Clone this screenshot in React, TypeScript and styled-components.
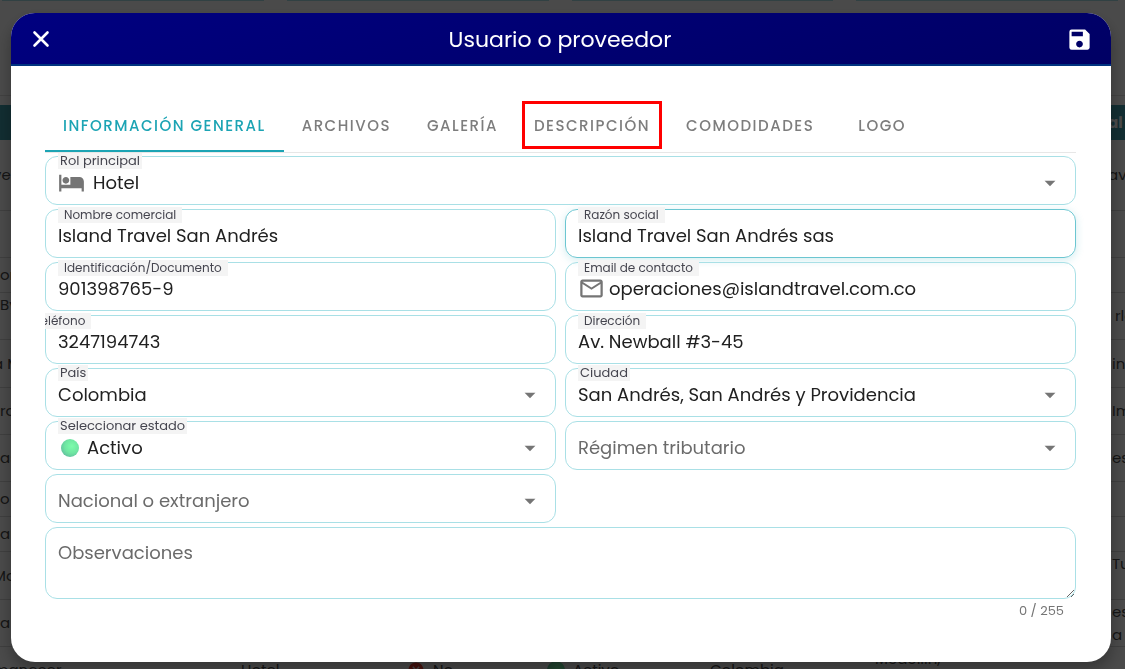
import React, { useState } from "react";
import styled, { createGlobalStyle, css } from "styled-components";
import { MdArrowDropDown, MdHotel, MdOutlineEmail, MdSave, MdCancel } from "react-icons/md";

const GlobalStyle = createGlobalStyle`
  * { box-sizing: border-box; }
  body {
    margin: 0;
    background: #fff;
    color: #212121;
    font-family: Poppins, Inter, "Open Sans", sans-serif;
  }
  button, input, select, textarea { font: inherit; color: inherit; }
`;

/* Listing behind the dialog */

const Page = styled.div`
  height: 100vh;
  overflow: hidden;
`;

const Filters = styled.div`
  display: grid;
  grid-template-columns: repeat(4, 1fr);
  gap: 23px;
  height: 96px;
  padding: 0 7px 0 2px;
  border-bottom: 1px solid #e0e0e0;
`;

const FilterEdge = styled.div`
  height: 1px;
  background: #a9dfe6;
`;

const Listing = styled.table`
  width: calc(100% + 7px);
  margin: 9px 0 0 -7px;
  border-collapse: collapse;
  table-layout: fixed;
  font-size: 15px;
  white-space: nowrap;

  th {
    height: 35px;
    padding: 0;
    background: #3f9dab;
    color: #fff;
    text-align: left;
  }
`;

const ListingRow = styled.tr<{ $height: number }>`
  height: ${(p) => p.$height}px;
`;

const Cell = styled.td<{ $inset?: number; $top?: boolean }>`
  padding: 0 0 0 ${(p) => p.$inset ?? 0}px;
  border-bottom: 1px solid #d8d8d8;
  color: #4a4a4a;
  line-height: 23px;
  vertical-align: ${(p) => (p.$top ? "top" : "middle")};
`;

const StateCell = styled.span`
  display: flex;
  align-items: center;
  gap: 8px;
`;

const Dot = styled.span`
  width: 18px;
  height: 18px;
  border-radius: 50%;
  background: radial-gradient(circle at 60% 40%, #7dfcab 0%, #6fe6a2 45%, #5aa69c 100%);
`;

/* Dialog */

const Scrim = styled.div`
  position: fixed;
  inset: 0;
  padding: 13px 14px 7px 11px;
  background: rgba(0, 0, 0, 0.71);
`;

const Dialog = styled.section`
  border-radius: 24px;
  overflow: hidden;
  background: #fff;
  box-shadow: 0 8px 16px rgba(0, 0, 0, 0.3);
`;

const Header = styled.header`
  display: flex;
  align-items: center;
  justify-content: space-between;
  height: 53px;
  padding: 1px 18px 0 16px;
  background: linear-gradient(165deg, #000080, #000064);
  border-bottom: 2px solid #003380;
  color: #fff;
`;

const Title = styled.h1`
  margin: 0;
  padding-top: 2px;
  font-size: 22px;
  line-height: 32px;
  font-weight: 400;
`;

const IconButton = styled.button`
  display: flex;
  padding: 0;
  border: 0;
  background: none;
  color: #fff;
  cursor: pointer;
`;

const Content = styled.div`
  padding: 34px 35px 42px 34px;
`;

const Tabs = styled.nav`
  display: flex;
  height: 53px;
  margin-bottom: 3px;
  border-bottom: 1px solid #e7e7e7;
`;

const Tab = styled.button<{ $active: boolean; $marked: boolean }>`
  position: relative;
  min-width: 100px;
  padding: 0 18px;
  border: 0;
  border-bottom: 2px solid ${(p) => (p.$active ? "#1ca4b4" : "transparent")};
  background: none;
  color: ${(p) => (p.$active ? "#1ca4b4" : "#7d7d7d")};
  font-size: 15px;
  font-weight: 500;
  letter-spacing: 0.1em;
  text-transform: uppercase;
  white-space: nowrap;
  cursor: pointer;

  ${(p) =>
    p.$marked &&
    css`
      &::after {
        content: "";
        position: absolute;
        inset: 1px 6px;
        border: 3px solid #f00;
      }
    `}
`;

const Form = styled.form`
  display: grid;
  grid-template-columns: 1fr 1fr;
  gap: 4px 9px;
`;

const FieldBox = styled.div<{ $wide?: boolean; $focused?: boolean; $clipped?: boolean }>`
  position: relative;
  display: flex;
  align-items: center;
  height: 49px;
  padding: 4px 12px 0;
  border: 1px solid ${(p) => (p.$focused ? "#6cc6d1" : "#a9e0e6")};
  border-radius: 12px;
  color: #212121;
  ${(p) => p.$wide && "grid-column: 1 / -1;"}
  ${(p) => p.$focused && "box-shadow: 0 2px 8px rgba(28, 164, 180, 0.2);"}
  ${(p) => p.$clipped && "clip-path: inset(-4px 0 0 0);"}
`;

const FloatingLabel = styled.label<{ $select?: boolean; $shifted?: boolean }>`
  position: absolute;
  z-index: 1;
  top: ${(p) => (p.$select ? -4 : -3)}px;
  left: ${(p) => (p.$shifted ? "-18px" : "12px")};
  padding: 0 ${(p) => (p.$select ? 2 : 6)}px;
  background: #f4f4f4;
  color: #45454f;
  font-size: ${(p) => (p.$select ? 13 : 12)}px;
  line-height: 16px;
  white-space: nowrap;
`;

const Adornment = styled.span<{ $gap: number }>`
  display: flex;
  flex: none;
  margin-right: ${(p) => p.$gap}px;
  color: #757575;
`;

const StatusDot = styled(Dot)`
  flex: none;
  margin: 0 8px 0 3px;
`;

const control = css`
  flex: 1;
  min-width: 0;
  padding: 0;
  border: 0;
  outline: 0;
  background: transparent;
  font-size: 18px;
  line-height: 24px;
`;

const Input = styled.input`
  ${control}
`;

const Select = styled.select<{ $empty: boolean }>`
  ${control}
  appearance: none;
  color: ${(p) => (p.$empty ? "#6b6b6b" : "#212121")};
`;

const Arrow = styled(MdArrowDropDown)`
  position: absolute;
  right: 12px;
  top: 13px;
  width: 26px;
  height: 26px;
  color: #757575;
  pointer-events: none;
`;

const NotesBox = styled.div`
  grid-column: 1 / -1;
`;

const Notes = styled.textarea`
  display: block;
  width: 100%;
  height: 72px;
  padding: 13px 12px;
  border: 1px solid #a9e0e6;
  border-radius: 12px;
  outline: 0;
  background: transparent;
  font-size: 18px;
  line-height: 24px;
  resize: vertical;

  &::placeholder { color: #6b6b6b; opacity: 1; }
`;

const Counter = styled.output`
  display: block;
  padding: 3px 12px 0;
  color: #757575;
  font-size: 13px;
  line-height: 18px;
  text-align: right;
`;

const tabs = ["Información general", "Archivos", "Galería", "Descripción", "Comodidades", "Logo"];

type Row = {
  height: number;
  first: string;
  last: React.ReactNode;
  firstInset?: number;
  lastInset?: number;
  firstTop?: boolean;
  lastTop?: boolean;
};

const rows: Row[] = [
  { height: 70, first: "ve", last: "ave" },
  { height: 47, first: "", last: "" },
  { height: 35, first: "on", last: "", firstInset: 7 },
  { height: 47, first: "By", last: "rlo", firstInset: 7, lastInset: 7, firstTop: true },
  { height: 48, first: "a M", last: "in", lastInset: 4 },
  { height: 47, first: "ro", last: "Im", firstInset: 7, lastInset: 4 },
  { height: 47, first: "as", last: "es", firstInset: 7, lastInset: 4 },
  { height: 35, first: "o", last: "", firstInset: 7 },
  { height: 35, first: "an", last: "", firstInset: 7 },
  { height: 48, first: "Mo", last: "Tu", lastInset: 4, lastTop: true },
  { height: 47, first: "a", last: <>es<br />a</>, firstInset: 7, lastInset: 4 },
];

type TextFieldProps = {
  id: string;
  label: string;
  value: string;
  type?: string;
  icon?: React.ReactNode;
  focused?: boolean;
  shifted?: boolean;
};

function TextField({ id, label, value, type = "text", icon, focused, shifted }: TextFieldProps) {
  return (
    <FieldBox $focused={focused} $clipped={shifted}>
      <FloatingLabel htmlFor={id} $shifted={shifted}>{label}</FloatingLabel>
      {icon}
      <Input id={id} type={type} defaultValue={value} />
    </FieldBox>
  );
}

type SelectFieldProps = {
  id: string;
  label: string;
  value?: string;
  icon?: React.ReactNode;
  wide?: boolean;
};

function SelectField({ id, label, value, icon, wide }: SelectFieldProps) {
  return (
    <FieldBox $wide={wide}>
      {value && <FloatingLabel htmlFor={id} $select>{label}</FloatingLabel>}
      {icon}
      <Select id={id} aria-label={label} $empty={!value} defaultValue={value ?? label}>
        <option>{value ?? label}</option>
      </Select>
      <Arrow aria-hidden />
    </FieldBox>
  );
}

function CloseIcon() {
  return (
    <svg width="27" height="27" viewBox="0 0 27 27" fill="none" stroke="currentColor" strokeWidth="2.6" strokeLinecap="round" aria-hidden="true">
      <path d="M7.5 6.5l13 13M20.5 6.5L7.5 19.5" />
    </svg>
  );
}

export default function App() {
  const [active, setActive] = useState(tabs[0]);
  const [notes, setNotes] = useState("");

  return (
    <>
      <GlobalStyle />
      <Page aria-hidden="true">
        <Filters>
          <FilterEdge />
          <FilterEdge />
          <FilterEdge />
          <FilterEdge />
        </Filters>
        <Listing>
          <colgroup>
            <col width="248" />
            <col width="166" />
            <col width="140" />
            <col width="163" />
            <col width="165" />
            <col width="233" />
            <col />
          </colgroup>
          <thead>
            <tr>
              <th colSpan={6} />
              <th>al</th>
            </tr>
          </thead>
          <tbody>
            {rows.map((row, i) => (
              <ListingRow key={i} $height={row.height}>
                <Cell colSpan={6} $inset={row.firstInset} $top={row.firstTop}>{row.first}</Cell>
                <Cell $inset={row.lastInset} $top={row.lastTop}>{row.last}</Cell>
              </ListingRow>
            ))}
            <ListingRow $height={47}>
              <Cell>manecer</Cell>
              <Cell>Hotel</Cell>
              <Cell><StateCell><MdCancel size={18} color="#f44336" />No</StateCell></Cell>
              <Cell><StateCell><Dot />Activo</StateCell></Cell>
              <Cell>Colombia</Cell>
              <Cell $top>Medellín,</Cell>
              <Cell />
            </ListingRow>
          </tbody>
        </Listing>
      </Page>
      <Scrim>
        <Dialog role="dialog" aria-modal="true" aria-labelledby="dialog-title">
          <Header>
            <IconButton type="button" aria-label="Cerrar"><CloseIcon /></IconButton>
            <Title id="dialog-title">Usuario o proveedor</Title>
            <IconButton type="button" aria-label="Guardar"><MdSave size={27} /></IconButton>
          </Header>
          <Content>
            <Tabs>
              {tabs.map((tab) => (
                <Tab
                  key={tab}
                  type="button"
                  $active={tab === active}
                  $marked={tab === "Descripción"}
                  onClick={() => setActive(tab)}
                >
                  {tab}
                </Tab>
              ))}
            </Tabs>
            <Form>
              <SelectField id="rol" label="Rol principal" value="Hotel" wide icon={<Adornment $gap={8}><MdHotel size={27} /></Adornment>} />
              <TextField id="nombre" label="Nombre comercial" value="Island Travel San Andrés" />
              <TextField id="razon" label="Razón social" value="Island Travel San Andrés sas" focused />
              <TextField id="documento" label="Identificación/Documento" value="901398765-9" />
              <TextField id="email" type="email" label="Email de contacto" value="operaciones@islandtravel.com.co" icon={<Adornment $gap={4}><MdOutlineEmail size={27} /></Adornment>} />
              <TextField id="telefono" type="tel" label="Teléfono" value="3247194743" shifted />
              <TextField id="direccion" label="Dirección" value="Av. Newball #3-45" />
              <SelectField id="pais" label="País" value="Colombia" />
              <SelectField id="ciudad" label="Ciudad" value="San Andrés, San Andrés y Providencia" />
              <SelectField id="estado" label="Seleccionar estado" value="Activo" icon={<StatusDot />} />
              <SelectField id="regimen" label="Régimen tributario" />
              <SelectField id="origen" label="Nacional o extranjero" />
              <NotesBox>
                <Notes
                  aria-label="Observaciones"
                  placeholder="Observaciones"
                  maxLength={255}
                  value={notes}
                  onChange={(e) => setNotes(e.target.value)}
                />
                <Counter>{notes.length} / 255</Counter>
              </NotesBox>
            </Form>
          </Content>
        </Dialog>
      </Scrim>
    </>
  );
}
